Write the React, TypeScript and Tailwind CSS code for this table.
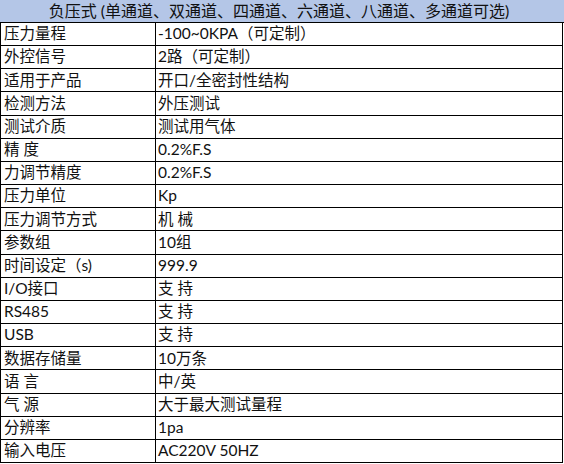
const rows: [string, string][] = [
  ["压力量程", "-100~0KPA（可定制）"],
  ["外控信号", "2路（可定制）"],
  ["适用于产品", "开口/全密封性结构"],
  ["检测方法", "外压测试"],
  ["测试介质", "测试用气体"],
  ["精 度", "0.2%F.S"],
  ["力调节精度", "0.2%F.S"],
  ["压力单位", "Kp"],
  ["压力调节方式", "机 械"],
  ["参数组", "10组"],
  ["时间设定（s)", "999.9"],
  ["I/O接口", "支 持"],
  ["RS485", "支 持"],
  ["USB", "支 持"],
  ["数据存储量", "10万条"],
  ["语 言", "中/英"],
  ["气 源", "大于最大测试量程"],
  ["分辨率", "1pa"],
  ["输入电压", "AC220V 50HZ"],
];

export default function App() {
  return (
    <div className="w-[564px] h-[464px] bg-white text-[#111] font-['Lato','Noto_Sans_CJK_SC',sans-serif]">
      <div className="h-[23px] bg-[#b4c6e7] border-b border-black flex items-center justify-center text-[16px] leading-none pr-[6px]">
        负压式 (单通道、双通道、四通道、六通道、八通道、多通道可选)
      </div>
      <div className="w-[563px] border-l border-r border-black">
        {rows.map(([label, value], i) => (
          <div
            key={i}
            className="grid grid-cols-[155px_1fr] h-[23.16px] border-b border-black text-[15.5px] leading-none"
          >
            <div className="flex items-center pl-[3px] border-r border-black whitespace-nowrap">
              {label}
            </div>
            <div className="flex items-center pl-[2px] whitespace-nowrap">{value}</div>
          </div>
        ))}
      </div>
    </div>
  );
}
